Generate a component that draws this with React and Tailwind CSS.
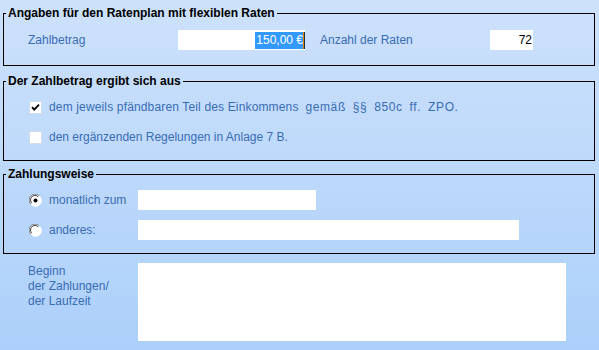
import React from "react";

function Checkbox({ checked }) {
  return (
    <svg width="13" height="13" viewBox="0 0 13 13" className="shrink-0">
      <rect x="0.5" y="0.5" width="12" height="12" fill="#ffffff" stroke="#d4dce6" />
      {checked && (
        <path d="M3 6.2 L5.2 8.6 L10 3.6" fill="none" stroke="#000" strokeWidth="1.8" />
      )}
    </svg>
  );
}

function Radio({ checked }) {
  return (
    <svg width="13" height="13" viewBox="0 0 13 13" className="shrink-0">
      <circle cx="6.5" cy="6.5" r="6" fill="#ffffff" />
      <path d="M1.8 10.2 A5.6 5.6 0 0 1 10.2 1.8" fill="none" stroke="#808080" strokeWidth="1" />
      <path d="M2.8 9.2 A4.4 4.4 0 0 1 9.2 2.8" fill="none" stroke="#404040" strokeWidth="1" />
      <path d="M10.9 3 A5.6 5.6 0 0 1 3 10.9" fill="none" stroke="#ffffff" strokeWidth="1" />
      {checked && <circle cx="6.5" cy="6.5" r="2" fill="#000" />}
    </svg>
  );
}

const legendCls = "ml-[2px] px-[2px] font-bold text-black text-[12px] leading-[15px] h-[15px]";
const labelCls = "text-[#3a6cb3] text-[12px]";

export default function App() {
  return (
    <div className="w-[599px] h-[350px] overflow-hidden bg-gradient-to-b from-[#cde1fb] to-[#acd0fa] font-['Liberation_Sans',Arial,sans-serif] pl-[3px] pt-[6px]">
      <fieldset className="w-[592px] border border-black">
        <legend className={legendCls}>Angaben für den Ratenplan mit flexiblen Raten</legend>
        <div className="flex items-center h-[20px] pl-[24px] mt-[9px] mb-[15px]">
          <span className={`${labelCls} w-[150px]`}>Zahlbetrag</span>
          <div className="w-[127px] h-[20px] bg-white flex items-center justify-end text-[12px]">
            <span className="bg-[#3399ff] text-white leading-[17px] h-[17px] pl-[1px]">150,00 €</span>
            <span className="w-[1px] h-[17px] bg-[#e08a00]" />
            <span className="w-[1px] h-[17px] bg-[#203040]" />
          </div>
          <span className={`${labelCls} ml-[15px] w-[170px]`}>Anzahl der Raten</span>
          <div className="w-[43px] h-[20px] bg-white flex items-center justify-end pr-[1px] text-[12px] text-black">72</div>
        </div>
      </fieldset>

      <fieldset className="w-[592px] mt-[8px] border border-black">
        <legend className={legendCls}>Der Zahlbetrag ergibt sich aus</legend>
        <div className="flex flex-col gap-[10px] pl-[25px] pt-[8px] pb-[13px]">
          <div className="flex items-center h-[20px] gap-[7px]">
            <Checkbox checked />
            <span className={`${labelCls} tracking-[0.15px] whitespace-nowrap`}>
              dem jeweils pfändbaren Teil des Einkommens
              <span className="tracking-[0.6px] [word-spacing:3px]"> gemäß §§ 850c ff. ZPO.</span>
            </span>
          </div>
          <div className="flex items-center h-[20px] gap-[7px]">
            <Checkbox />
            <span className={labelCls}>den ergänzenden Regelungen in Anlage 7 B.</span>
          </div>
        </div>
      </fieldset>

      <fieldset className="w-[592px] mt-[6px] border border-black">
        <legend className={legendCls}>Zahlungsweise</legend>
        <div className="flex flex-col gap-[10px] pl-[25px] pt-[8px] pb-[13px]">
          <div className="flex items-center h-[20px]">
            <Radio checked />
            <span className={`${labelCls} ml-[7px] w-[89px]`}>monatlich zum</span>
            <div className="w-[178px] h-[20px] bg-white" />
          </div>
          <div className="flex items-center h-[20px]">
            <Radio />
            <span className={`${labelCls} ml-[7px] w-[89px]`}>anderes:</span>
            <div className="w-[381px] h-[20px] bg-white" />
          </div>
        </div>
      </fieldset>

      <div className="flex mt-[9px] pl-[25px]">
        <div className={`${labelCls} w-[110px] leading-[15px] pt-[1px]`}>
          Beginn
          <br />
          der Zahlungen/
          <br />
          der Laufzeit
        </div>
        <div className="w-[428px] h-[78px] bg-white" />
      </div>
    </div>
  );
}
